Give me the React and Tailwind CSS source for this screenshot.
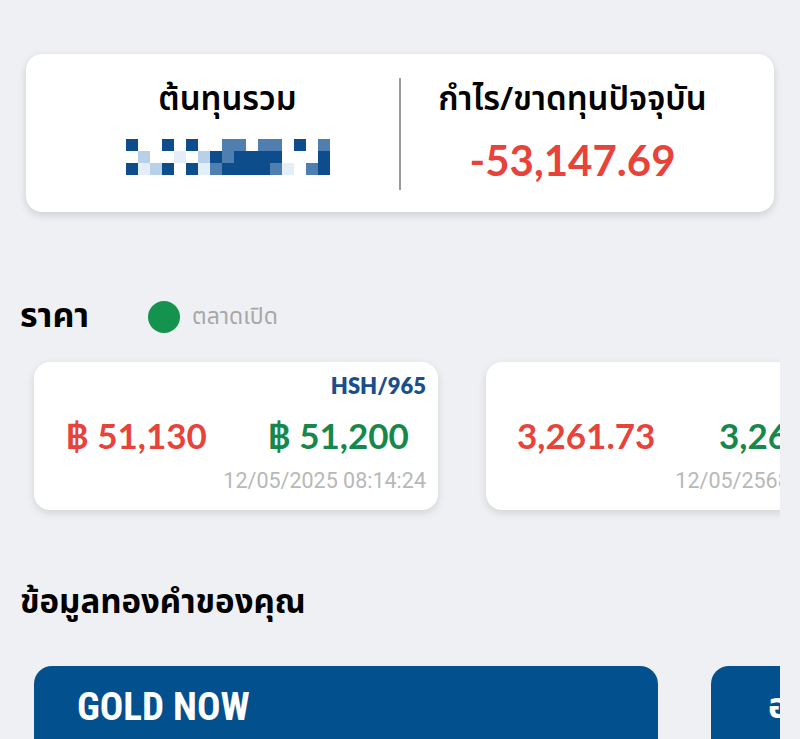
import React from 'react';

const C = { D: '#0e4d8c', M: '#4f7fb0', L: '#b9d1e8', V: '#e4eef8', W: '#ffffff' };
const MOSAIC = [
  'DWWDWDWWMMWMMWDWM',
  'WLWWVWLDMDDDDWWWD',
  'DVLDWDVMDDDDMVWMD',
];

const thai = { fontFamily: '"Noto Sans Thai", "Noto Sans", "Liberation Sans", sans-serif' };
const num = { fontFamily: 'Lato, "Noto Sans", sans-serif' };
const condensed = { fontFamily: '"Roboto Condensed", "Liberation Sans Narrow", Roboto, sans-serif' };

function Mosaic() {
  return (
    <div className="flex flex-col">
      {MOSAIC.map((row, r) => (
        <div key={r} className="flex">
          {row.split('').map((c, i) => (
            <div key={i} className="w-[12px] h-[12px]" style={{ backgroundColor: C[c] }} />
          ))}
        </div>
      ))}
    </div>
  );
}

function PriceCard({ tag, bid, ask, time, baht }) {
  return (
    <div className="shrink-0 w-[404px] h-[148px] bg-white rounded-[16px] shadow-[0_3px_8px_rgba(0,0,0,0.12)] pt-[12px] pr-[12px] pl-[31px] flex flex-col">
      <div className="h-[24px] text-right text-[22px] font-extrabold text-[#1a4f8b] leading-[24px]" style={num}>{tag}</div>
      <div className="flex items-center mt-[18px] h-[38px] text-[35px] font-bold leading-none whitespace-nowrap" style={num}>
        <span className="w-[202px] shrink-0 text-[#e8433a]">{baht && '฿ '}{bid}</span>
        <span className="text-[#17884b]">{baht && '฿ '}{ask}</span>
      </div>
      <div className="text-right text-[21.5px] text-[#b8b8b8] mt-[14px] leading-[26px] whitespace-nowrap" style={{ fontFamily: 'Roboto, sans-serif' }}>{time}</div>
    </div>
  );
}

export default function App() {
  return (
    <div className="w-[800px] h-[739px] overflow-hidden bg-[#eff0f3]" style={thai}>
      <div className="pt-[54px] px-[26px]">
        <div className="h-[158px] bg-white rounded-[16px] shadow-[0_3px_8px_rgba(0,0,0,0.14)] flex items-start px-[30px] pt-[24px]">
          <div className="flex-1 flex flex-col items-center">
            <div className="text-[33px] font-semibold text-black leading-[44px]">ต้นทุนรวม</div>
            <div className="mt-[17px]"><Mosaic /></div>
          </div>
          <div className="w-[2px] h-[112px] bg-[#9a9a9a]" />
          <div className="flex-1 flex flex-col items-center">
            <div className="text-[33px] font-semibold text-black leading-[44px]">กำไร/ขาดทุนปัจจุบัน</div>
            <div className="text-[42px] font-bold text-[#e8433a] leading-[48px] mt-[14px]" style={num}>-53,147.69</div>
          </div>
        </div>
      </div>

      <div className="mt-[85px] pl-[20px] flex items-center h-[40px]">
        <div className="text-[34px] font-bold text-black w-[128px] leading-[40px]">ราคา</div>
        <div className="w-[32px] h-[32px] rounded-full bg-[#14934f]" />
        <div className="ml-[12px] text-[23px] text-[#a8a8a8] leading-[40px]">ตลาดเปิด</div>
      </div>

      <div className="w-[780px] overflow-hidden mt-[17px]">
        <div className="flex gap-[48px] pl-[34px] pt-[8px] pb-[12px]">
          <PriceCard tag="HSH/965" bid="51,130" ask="51,200" time="12/05/2025 08:14:24" baht />
          <PriceCard tag="HSH/965" bid="3,261.73" ask="3,262.23" time="12/05/2568 08:14:24" />
        </div>
      </div>

      <div className="mt-[59px] pl-[20px] text-[33px] font-bold text-black leading-[44px]">ข้อมูลทองคำของคุณ</div>

      <div className="w-[780px] overflow-hidden mt-[41px]">
        <div className="flex gap-[53px] pl-[34px]">
          <div className="shrink-0 w-[624px] h-[120px] bg-[#03508f] rounded-t-[18px] pl-[43px] pt-[18px]">
            <div className="text-[39px] font-bold text-white leading-[46px]" style={condensed}>GOLD NOW</div>
          </div>
          <div className="shrink-0 w-[624px] h-[120px] bg-[#03508f] rounded-t-[18px] pl-[57px] pt-[18px]">
            <div className="text-[36px] font-bold text-white leading-[46px]">ออมทอง</div>
          </div>
        </div>
      </div>
    </div>
  );
}
